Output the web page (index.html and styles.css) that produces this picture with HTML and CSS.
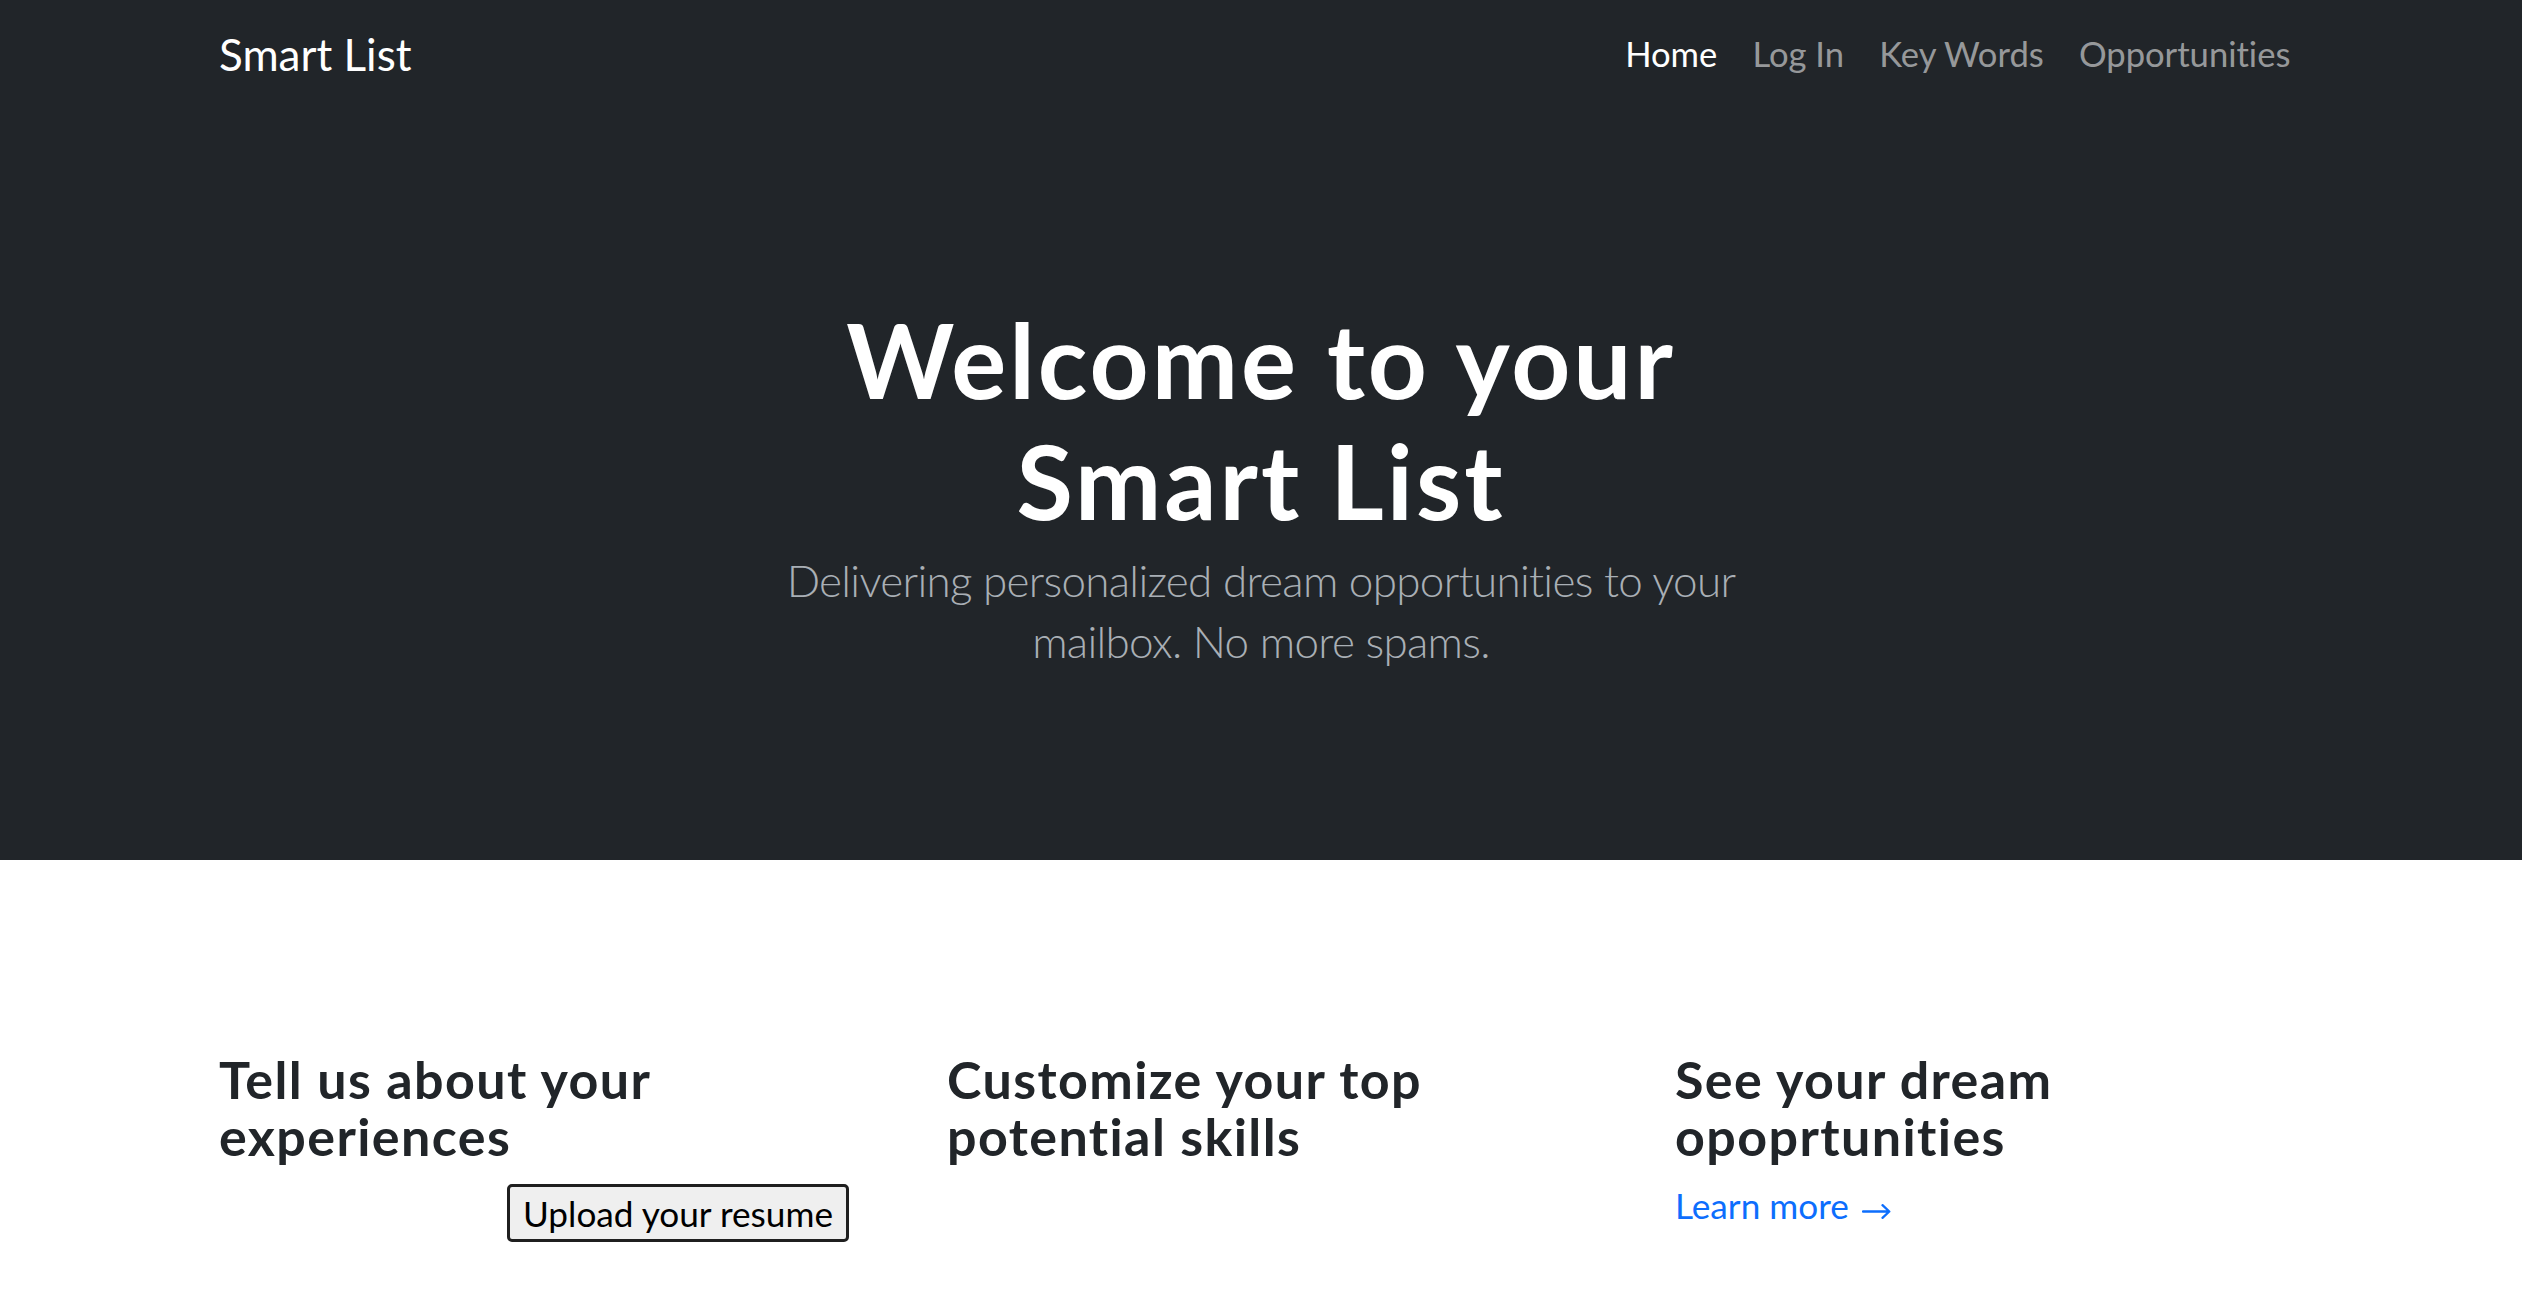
FILE: index.html
```html
<!DOCTYPE html>
<html lang="en">
<head>
<meta charset="utf-8">
<title>Smart List</title>
<link rel="stylesheet" href="styles.css">
</head>
<body>
<header class="hero">
  <nav class="navbar">
    <div class="container nav-inner">
      <a class="brand" href="#">Smart List</a>
      <ul class="nav-links">
        <li><a class="nav-link active" href="#">Home</a></li>
        <li><a class="nav-link" href="#">Log In</a></li>
        <li><a class="nav-link" href="#">Key Words</a></li>
        <li><a class="nav-link" href="#">Opportunities</a></li>
      </ul>
    </div>
  </nav>
  <div class="hero-body">
    <h1 class="hero-title">Welcome to your<br>Smart List</h1>
    <p class="lead">Delivering personalized dream opportunities to your mailbox. No more spams.</p>
  </div>
</header>
<main class="container features">
  <div class="feature">
    <h3 class="feature-title">Tell us about your experiences</h3>
    <div class="upload-row">
      <button class="upload-btn" type="button">Upload your resume</button>
    </div>
  </div>
  <div class="feature">
    <h3 class="feature-title">Customize your top potential skills</h3>
  </div>
  <div class="feature">
    <h3 class="feature-title">See your dream opoprtunities</h3>
    <a class="learn-more" href="#">Learn more <svg class="arrow" width="29" height="15" viewBox="0 0 29 15" aria-hidden="true"><path d="M1 7.5H27M20.5 1.2L27.3 7.5L20.5 13.8" fill="none" stroke="currentColor" stroke-width="2.3" stroke-linecap="round" stroke-linejoin="round"/></svg></a>
  </div>
</main>
</body>
</html>
```
FILE: styles.css
```css
* { box-sizing: border-box; }
html, body { margin: 0; padding: 0; }
body {
  font-family: Lato, "Open Sans", "Liberation Sans", sans-serif;
  font-variant-ligatures: none;
  color: #212529;
  background: #fff;
  font-size: 35.2px;
  line-height: 1.5;
}
.container {
  width: 2088px;
  margin: 0 auto;
}
.hero {
  background: #212529;
  height: 860px;
}
.navbar {
  padding: 21px 0 17px;
}
.nav-inner {
  display: flex;
  align-items: center;
  justify-content: space-between;
}
.brand {
  font-size: 44px;
  line-height: 66px;
  padding-left: 2px;
  color: #fff;
  text-decoration: none;
}
.nav-links {
  display: flex;
  list-style: none;
  margin: 0 -3px 0 0;
  padding: 0;
}
.nav-link {
  display: block;
  padding: 0 17.6px;
  font-size: 34.6px;
  line-height: 52.8px;
  color: rgba(255,255,255,0.55);
  text-decoration: none;
}
.nav-link.active { color: #fff; }
.hero-body {
  text-align: center;
  padding-top: 195px;
}
.hero-title {
  margin: 0;
  color: #fff;
  font-size: 103px;
  line-height: 121px;
  font-weight: 700;
  letter-spacing: 3px;
}
.lead {
  margin: 9px auto 0;
  max-width: 1045px;
  font-size: 44px;
  line-height: 61px;
  font-weight: 300;
  letter-spacing: -0.7px;
  color: #a9afb5;
}
.features {
  display: grid;
  grid-template-columns: repeat(3, 1fr);
  column-gap: 96px;
  padding-top: 191px;
}
.feature {
  padding-left: 2px;
}
.feature-title {
  margin: 0;
  font-size: 52px;
  line-height: 57px;
  font-weight: 700;
  letter-spacing: 1.4px;
}
.upload-row {
  display: flex;
  justify-content: flex-end;
  margin-top: 19px;
}
.upload-btn {
  font-family: inherit;
  font-size: 35.2px;
  line-height: 48px;
  padding: 2px 13px;
  border: 3px solid #1f1f1f;
  border-radius: 5px;
  background: #efefef;
  color: #000;
}
.learn-more {
  display: inline-block;
  margin-top: 14px;
  color: #0d6efd;
  text-decoration: none;
  font-size: 35.2px;
  line-height: 52.8px;
}
.arrow {
  vertical-align: 0;
  margin-left: 4px;
}
```
